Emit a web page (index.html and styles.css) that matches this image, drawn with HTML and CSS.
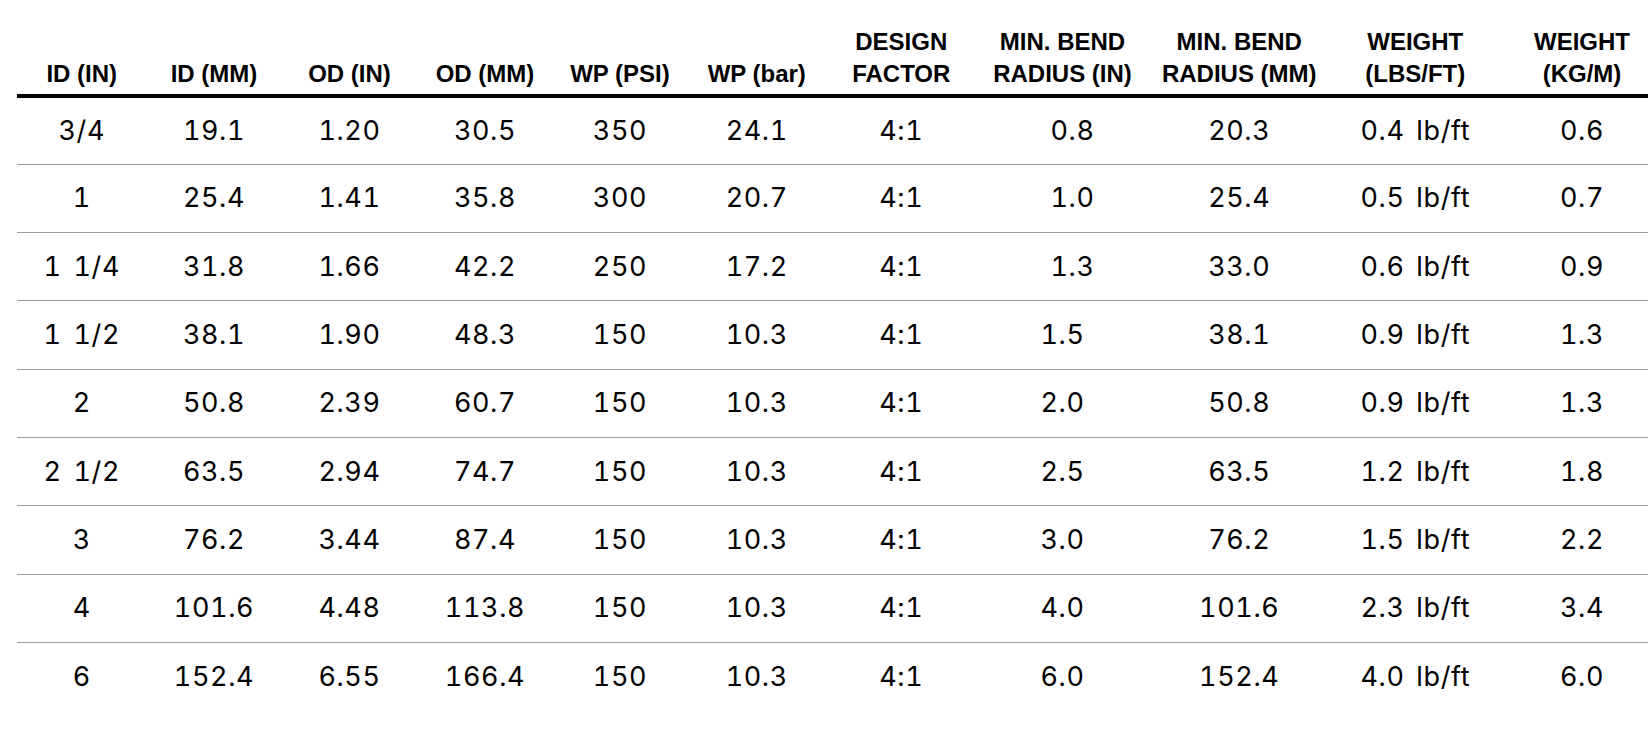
FILE: index.html
```html
<!DOCTYPE html>
<html lang="en">
<head>
<meta charset="utf-8">
<title>Hose Specifications</title>
<link rel="stylesheet" href="styles.css">
</head>
<body>
<div class="wrap">
<table class="spec">
<colgroup>
<col class="c1"><col class="c2"><col class="c3"><col class="c4"><col class="c5"><col class="c6"><col class="c7"><col class="c8"><col class="c9"><col class="c10"><col class="c11">
</colgroup>
<thead>
<tr>
<th>ID (IN)</th>
<th>ID (MM)</th>
<th>OD (IN)</th>
<th>OD (MM)</th>
<th>WP (PSI)</th>
<th>WP (bar)</th>
<th>DESIGN<br>FACTOR</th>
<th>MIN. BEND<br>RADIUS (IN)</th>
<th>MIN. BEND<br>RADIUS (MM)</th>
<th>WEIGHT<br>(LBS/FT)</th>
<th>WEIGHT<br>(KG/M)</th>
</tr>
</thead>
<tbody>
<tr><td>3/4</td><td>19.1</td><td>1.20</td><td>30.5</td><td>350</td><td>24.1</td><td>4:1</td><td class="shift">0.8</td><td>20.3</td><td>0.4 lb/ft</td><td>0.6</td></tr>
<tr><td>1</td><td>25.4</td><td>1.41</td><td>35.8</td><td>300</td><td>20.7</td><td>4:1</td><td class="shift">1.0</td><td>25.4</td><td>0.5 lb/ft</td><td>0.7</td></tr>
<tr><td>1 1/4</td><td>31.8</td><td>1.66</td><td>42.2</td><td>250</td><td>17.2</td><td>4:1</td><td class="shift">1.3</td><td>33.0</td><td>0.6 lb/ft</td><td>0.9</td></tr>
<tr><td>1 1/2</td><td>38.1</td><td>1.90</td><td>48.3</td><td>150</td><td>10.3</td><td>4:1</td><td>1.5</td><td>38.1</td><td>0.9 lb/ft</td><td>1.3</td></tr>
<tr><td>2</td><td>50.8</td><td>2.39</td><td>60.7</td><td>150</td><td>10.3</td><td>4:1</td><td>2.0</td><td>50.8</td><td>0.9 lb/ft</td><td>1.3</td></tr>
<tr><td>2 1/2</td><td>63.5</td><td>2.94</td><td>74.7</td><td>150</td><td>10.3</td><td>4:1</td><td>2.5</td><td>63.5</td><td>1.2 lb/ft</td><td>1.8</td></tr>
<tr><td>3</td><td>76.2</td><td>3.44</td><td>87.4</td><td>150</td><td>10.3</td><td>4:1</td><td>3.0</td><td>76.2</td><td>1.5 lb/ft</td><td>2.2</td></tr>
<tr><td>4</td><td>101.6</td><td>4.48</td><td>113.8</td><td>150</td><td>10.3</td><td>4:1</td><td>4.0</td><td>101.6</td><td>2.3 lb/ft</td><td>3.4</td></tr>
<tr><td>6</td><td>152.4</td><td>6.55</td><td>166.4</td><td>150</td><td>10.3</td><td>4:1</td><td>6.0</td><td>152.4</td><td>4.0 lb/ft</td><td>6.0</td></tr>
</tbody>
</table>
</div>
</body>
</html>
```
FILE: styles.css
```css
html, body {
  margin: 0;
  padding: 0;
  background: #ffffff;
}

.wrap {
  padding: 26px 0 0 17px;
  overflow: hidden;
  width: 1631px;
}

.spec {
  border-collapse: collapse;
  table-layout: fixed;
  width: 1646.5px;
  color: #000;
}

.c1 { width: 129.5px; }
.c2 { width: 135px; }
.c3 { width: 136px; }
.c4 { width: 135px; }
.c5 { width: 135px; }
.c6 { width: 138.5px; }
.c7 { width: 150.5px; }
.c8 { width: 172px; }
.c9 { width: 181.5px; }
.c10 { width: 170.5px; }
.c11 { width: 163px; }

.spec th {
  font-family: "Liberation Sans", Arial, sans-serif;
  font-weight: 700;
  font-size: 24px;
  line-height: 32px;
  text-align: center;
  vertical-align: bottom;
  padding: 0 0 4px 0;
  border-bottom: 4px solid #000;
  white-space: nowrap;
}

.spec td {
  font-family: Inter, "DejaVu Sans", sans-serif;
  font-weight: 400;
  font-size: 27px;
  font-variant-numeric: tabular-nums;
  letter-spacing: 0.6px;
  word-spacing: 4px;
  line-height: 32px;
  text-align: center;
  vertical-align: middle;
  height: 68.3px;
  padding: 0;
  box-sizing: border-box;
  border-bottom: 1px solid #9a9a9a;
  white-space: nowrap;
}

.spec tbody tr:last-child td {
  border-bottom: none;
}

.spec td.shift {
  padding-left: 20px;
}
```
